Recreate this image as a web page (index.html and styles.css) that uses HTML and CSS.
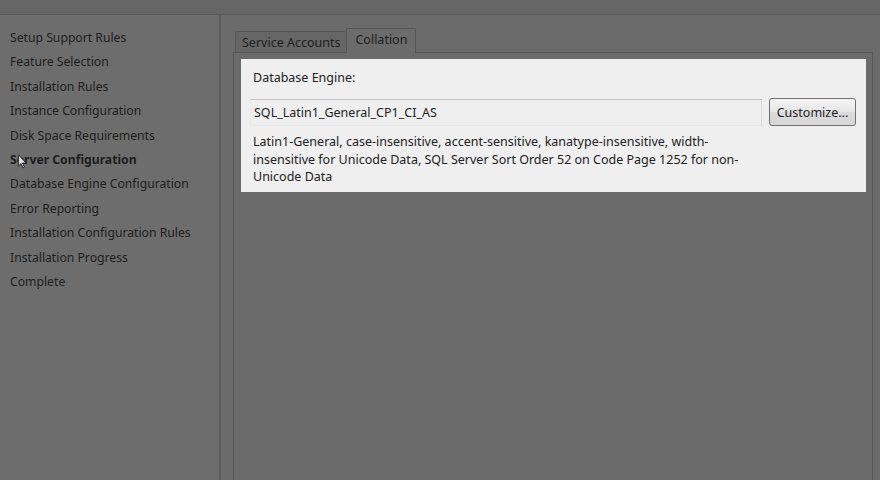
FILE: index.html
```
<!DOCTYPE html>
<html lang="en">

<head>
    <meta charset="UTF-8">
    <title>Server Configuration</title>
    <link rel="stylesheet" href="styles.css">
</head>

<body>
    <div class="topBar"></div>

    <div class="main">
        <ul class="steps">
            <li>Setup Support Rules</li>
            <li>Feature Selection</li>
            <li>Installation Rules</li>
            <li>Instance Configuration</li>
            <li>Disk Space Requirements</li>
            <li class="current">Server Configuration
                <svg class="cursor" width="9" height="15" viewBox="0 0 12 19">
                    <path d="M0.5 0.5 L0.5 15.5 L4 12.2 L6.6 18 L8.6 17.1 L6.1 11.5 L10.8 11.5 Z" fill="#e0e0e0" stroke="#1a1a1a" stroke-width="1.2" />
                </svg>
            </li>
            <li>Database Engine Configuration</li>
            <li>Error Reporting</li>
            <li>Installation Configuration Rules</li>
            <li>Installation Progress</li>
            <li>Complete</li>
        </ul>

        <div class="content">
            <div class="tabs">
                <span class="tab">Service Accounts</span>
                <span class="tab active">Collation</span>
            </div>
            <div class="tabPage">
                <div class="group">
                    <div class="groupLabel">Database Engine:</div>
                    <div class="fieldRow">
                        <div class="field">SQL_Latin1_General_CP1_CI_AS</div>
                        <button class="btn">Customize...</button>
                    </div>
                    <p class="desc">Latin1-General, case-insensitive, accent-sensitive, kanatype-insensitive, width-insensitive for Unicode Data, SQL Server Sort Order 52 on Code Page 1252 for non-Unicode Data</p>
                </div>
            </div>
        </div>
    </div>
</body>

</html>
```

FILE: styles.css
```
body {
    margin: 0;
    width: 880px;
    height: 480px;
    overflow: hidden;
    background-color: #6b6b6b;
    font-family: "Noto Sans", "Open Sans", sans-serif;
    font-size: 12.5px;
    color: #1e1e1e;
}

.topBar {
    height: 14px;
    background-color: #666666;
    border-bottom: 1px solid #5a5a5a;
}

.main {
    display: flex;
    height: 465px;
}

.steps {
    list-style: none;
    margin: 0;
    padding: 11px 0 0 10px;
    width: 209px;
    background-color: #6d6d6d;
    border-right: 2px solid #5b5b5b;
    font-size: 12.2px;
}

.steps li {
    height: 24.4px;
    line-height: 24.4px;
    white-space: nowrap;
}

.steps li.current {
    font-weight: bold;
    position: relative;
}

.cursor {
    position: absolute;
    left: 8px;
    top: 6px;
}

.content {
    flex: 1;
    padding: 12px 7px 0 12px;
    display: flex;
    flex-direction: column;
}

.tabs {
    display: flex;
    align-items: flex-end;
    padding-left: 2px;
    height: 25px;
}

.tab {
    height: 21px;
    line-height: 21px;
    padding: 0 6px;
    border: 1px solid #555555;
    border-bottom: none;
    border-radius: 2px 2px 0 0;
    background-color: #666666;
    color: #202020;
    margin-bottom: -1px;
}

.tab.active {
    height: 24px;
    line-height: 22px;
    padding: 0 8px;
    background-color: #6b6b6b;
    margin-left: -1px;
    position: relative;
    z-index: 1;
}

.tabPage {
    flex: 1;
    border: 1px solid #565656;
    border-bottom: none;
    padding: 6px 6px 0 7px;
}

.group {
    background-color: #efefef;
    height: 133px;
    padding: 11px 10px 0 12px;
    box-sizing: border-box;
    color: #222222;
}

.groupLabel {
    height: 16px;
    line-height: 16px;
}

.fieldRow {
    display: flex;
    align-items: center;
    gap: 7px;
    margin-top: 12px;
    margin-left: -3px;
}

.field {
    flex: 1;
    height: 27px;
    line-height: 25px;
    padding-left: 3px;
    border: 1px solid #e8e8e8;
    border-top-color: #c4c4c4;
    border-right-color: #dcdcdc;
    box-sizing: border-box;
}

.btn {
    width: 87px;
    height: 28px;
    font-family: inherit;
    font-size: 12.5px;
    color: #1e1e1e;
    border: 1px solid #707070;
    border-radius: 3px;
    background: linear-gradient(#f4f4f4, #e6e6e6 50%, #dcdcdc 51%, #d6d6d6);
    padding: 0;
}

.desc {
    margin: 7px 0 0 0;
    line-height: 17.5px;
    width: 500px;
}
```
